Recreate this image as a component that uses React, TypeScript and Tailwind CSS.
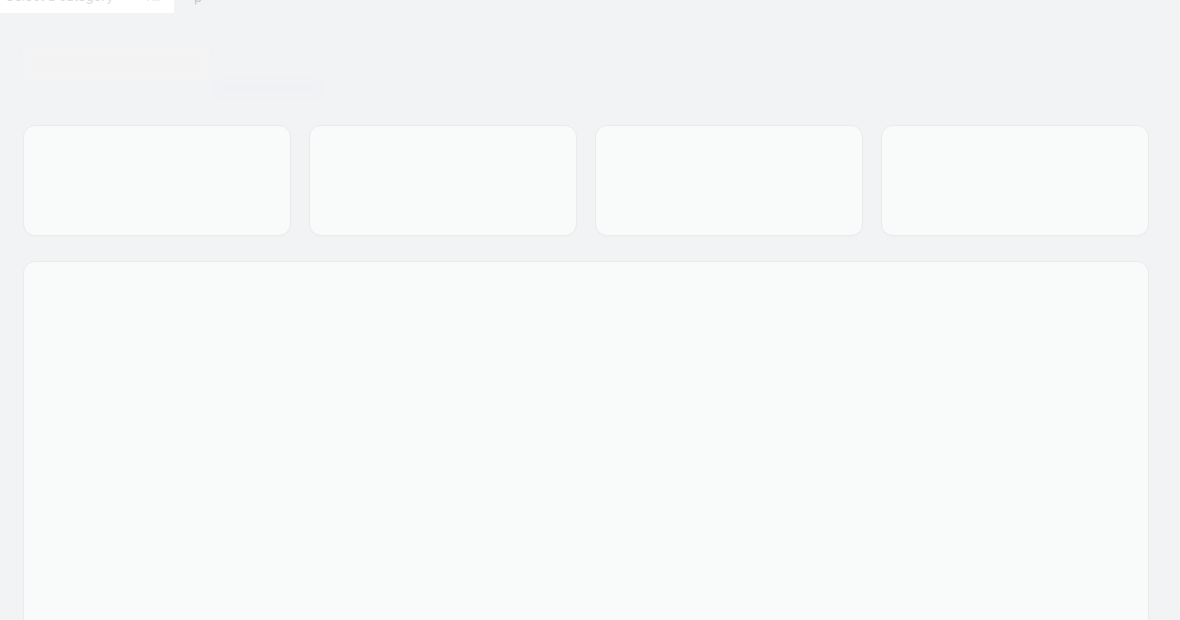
export default function App() {
  const stats = [1, 2, 3, 4];

  return (
    <div className="h-[620px] overflow-hidden bg-[#f2f3f5] font-['Inter',sans-serif]">
      {/* Top bar, scrolled mostly out of view */}
      <div className="flex items-end h-[13px] overflow-hidden">
        <div className="w-[174px] h-[13px] bg-white flex items-end justify-between px-[6px] pr-[14px] overflow-hidden">
          <span className="text-[13px] leading-none translate-y-[-10px] text-[#d9dbdf]">Select a category</span>
          <span className="text-[11px] leading-none translate-y-[-10px] text-[#e0e2e5]">All</span>
        </div>
        <span className="ml-[20px] text-[13px] leading-none translate-y-[-9px] text-[#c3c6cc]">p</span>
      </div>

      {/* Faded heading */}
      <div className="flex items-end gap-[5px] h-[112px] pl-[22px] pb-[28px]">
        <div className="w-[188px] h-[33px] mb-[17px] rounded-md bg-[#f3f3f3] blur-[3px]" />
        <div className="w-[105px] h-[15px] rounded bg-[#eff1f4] blur-[2px]" />
      </div>

      <main className="pl-[23px] pr-[31px]">
        <div className="grid grid-cols-4 gap-[18px]">
          {stats.map((s) => (
            <div
              key={s}
              className="h-[111px] rounded-xl bg-[#f9fafa] border border-[#e9ebee] shadow-[0_1px_2px_rgba(0,0,0,0.02)]"
            />
          ))}
        </div>

        <div className="mt-[25px] h-[400px] rounded-xl bg-[#f9fafa] border border-[#e9ebee] shadow-[0_1px_2px_rgba(0,0,0,0.02)]" />
      </main>
    </div>
  );
}
